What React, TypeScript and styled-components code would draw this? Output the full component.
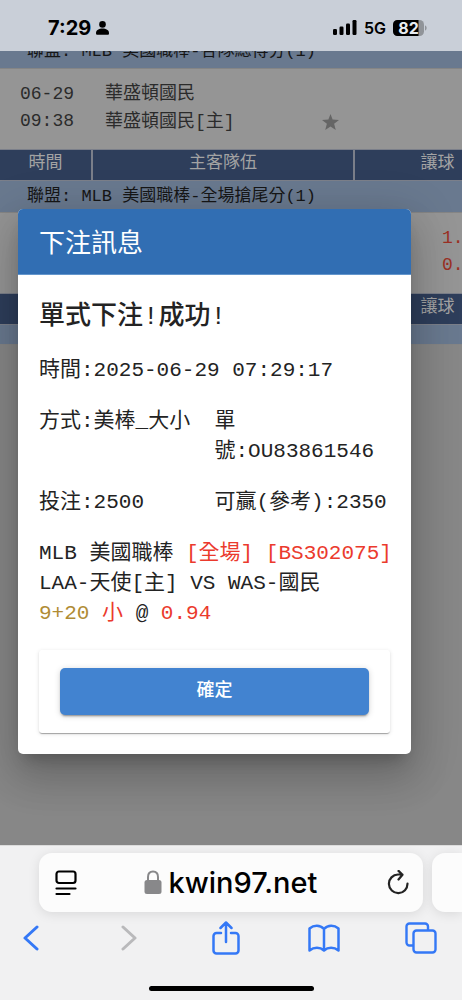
import React from "react";
import styled, { createGlobalStyle } from "styled-components";

const GlobalStyle = createGlobalStyle`
  * { box-sizing: border-box; }
  body {
    margin: 0;
    background: #f1f1f2;
    font-family: "Liberation Mono", "Noto Sans CJK TC", monospace;
    color: #232323;
  }
  button, input { font: inherit; color: inherit; border: 0; padding: 0; margin: 0; background: none; }
  button { cursor: pointer; }
  svg { display: block; }
`;

const Screen = styled.div`
  min-height: 100vh;
  display: flex;
  flex-direction: column;
`;

const StatusBar = styled.header`
  height: 51px;
  padding: 4px 35px 0 48px;
  display: flex;
  align-items: center;
  justify-content: space-between;
  background: #c9cfd8;
  color: #000;
  font-family: Inter, sans-serif;
`;

const StatusGroup = styled.div<{ $gap: number }>`
  display: flex;
  align-items: center;
  gap: ${(p) => p.$gap}px;
`;

const Clock = styled.span`
  font-size: 20px;
  font-weight: 700;
`;

const Network = styled.span`
  font-size: 16px;
  font-weight: 600;
`;

const Viewport = styled.main`
  position: relative;
  flex: 1;
  overflow: hidden;
  background: #878787;
`;

const OddsTable = styled.table`
  width: 521px;
  margin-top: -15px;
  table-layout: fixed;
  border-collapse: collapse;
  color: #242424;
`;

const HeadCell = styled.th`
  height: 31px;
  padding: 0 0 1px;
  border: 2px solid #7b7f8a;
  border-width: 1px 2px 1px 0;
  background: #2e3e5b;
  color: #a3a3a3;
  font-size: 17px;
  line-height: 24px;
  font-weight: 400;
`;

const LeagueCell = styled.td<{ $height: number }>`
  height: ${(p) => p.$height}px;
  padding: 1px 0 0 27px;
  border-bottom: 1px solid #858585;
  background: #69798f;
  color: #161616;
  font-size: 17px;
  line-height: 24px;
`;

const MatchCell = styled.td<{ $indent: number; $red?: boolean }>`
  height: 81px;
  padding: 12px 0 0 ${(p) => p.$indent}px;
  vertical-align: top;
  background: #959595;
  color: ${(p) => (p.$red ? "#9b3024" : "#2b2b2b")};
  font-size: 18px;
  line-height: 27px;
`;

const TeamRow = styled.div`
  display: flex;
  align-items: center;
  justify-content: space-between;
  padding: 1px 15px 0 0;
`;

const Overlay = styled.div`
  position: absolute;
  inset: 0;
  padding: 158px 51px 0 18px;
`;

const Dialog = styled.section`
  border-radius: 5px;
  overflow: hidden;
  background: #fff;
  box-shadow: 0 11px 15px -7px rgba(0, 0, 0, 0.2), 0 24px 38px 3px rgba(0, 0, 0, 0.14),
    0 9px 46px 8px rgba(0, 0, 0, 0.12);
`;

const DialogTitle = styled.h1`
  margin: 0;
  padding: 18px 21px 10px;
  background: #316eb3;
  border-bottom: 1px solid #6496cc;
  color: #fff;
  font-size: 26px;
  line-height: 37px;
  font-weight: 400;
`;

const DialogBody = styled.div`
  padding: 24px 21px 21px;
  display: flex;
  flex-direction: column;
  gap: 21px;
  font-size: 21px;
  line-height: 30px;
`;

const Result = styled.h2`
  margin: 0;
  font-size: 26px;
  line-height: 36px;
  font-weight: 500;
`;

const Line = styled.p`
  margin: 0;
  white-space: nowrap;
`;

const Pair = styled.div`
  display: grid;
  grid-template-columns: 1fr 1fr;
`;

const Item = styled.p`
  margin: 0;
`;

const Mark = styled.span<{ $gold?: boolean }>`
  color: ${(p) => (p.$gold ? "#b08c35" : "#eb3a2d")};
`;

const ActionCard = styled.div`
  padding: 18px 21px;
  border-radius: 3px;
  box-shadow: 0 2px 1px -1px rgba(0, 0, 0, 0.2), 0 1px 1px rgba(0, 0, 0, 0.14), 0 1px 4px rgba(0, 0, 0, 0.12);
`;

const ConfirmButton = styled.button`
  display: block;
  width: 100%;
  height: 47px;
  padding-bottom: 2px;
  border-radius: 5px;
  background: #4283d0;
  color: #fff;
  font-size: 18px;
  font-weight: 500;
  box-shadow: 0 3px 1px -2px rgba(0, 0, 0, 0.2), 0 2px 2px rgba(0, 0, 0, 0.14), 0 1px 6px rgba(0, 0, 0, 0.16);
`;

const BrowserBar = styled.footer`
  padding-bottom: 9px;
  border-top: 1px solid #dcdcdc;
  background: #f1f1f2;
  overflow: hidden;
`;

const TabStrip = styled.div`
  display: flex;
  gap: 9px;
  padding: 7px 0 0 39px;
`;

const AddressField = styled.div`
  flex: 1;
  height: 59px;
  padding: 0 14px 0 16px;
  display: flex;
  align-items: center;
  justify-content: space-between;
  border-radius: 13px;
  background: #fcfcfc;
  box-shadow: 0 2px 12px rgba(0, 0, 0, 0.1);
`;

const NextTab = styled.div`
  width: 30px;
  height: 59px;
  border-radius: 13px 0 0 13px;
  background: #fcfcfc;
  box-shadow: 0 2px 12px rgba(0, 0, 0, 0.1);
`;

const Site = styled.label`
  display: flex;
  align-items: center;
  gap: 7px;
`;

const AddressInput = styled.input`
  width: 152px;
  font-family: Inter, sans-serif;
  font-size: 29px;
  font-weight: 500;
  color: #000;
  outline: none;
`;

const Toolbar = styled.nav`
  display: flex;
  justify-content: space-between;
  padding: 8px 25px 0 15px;
  color: #3478f6;
`;

const ToolButton = styled.button`
  width: 32px;
  height: 36px;
  display: flex;
  align-items: center;
  justify-content: center;

  &:disabled { color: #b9b9bb; }
`;

const HomeIndicator = styled.div`
  width: 165px;
  height: 5px;
  margin: 30px auto 0;
  border-radius: 3px;
  background: #000;
`;

const Stroke = ({ w, h, d, width = 2.5 }: { w: number; h: number; d: string; width?: number }) => (
  <svg width={w} height={h} viewBox={`0 0 ${w} ${h}`} fill="none" stroke="currentColor" strokeWidth={width} strokeLinecap="round" strokeLinejoin="round" aria-hidden="true">
    <path d={d} />
  </svg>
);

const PersonIcon = () => (
  <svg width="13" height="14" viewBox="0 0 13 14" aria-hidden="true">
    <circle cx="6.5" cy="3.4" r="3.3" />
    <path d="M0 12.2C0 9.2 3 7.6 6.5 7.6S13 9.200 13 12.2C13 13.500 12.5 13.8 11.500 13.8H1.5C.5 13.8 0 13.500 0 12.2Z" />
  </svg>
);

const SignalIcon = () => (
  <svg width="24" height="15" viewBox="0 0 24 15" aria-hidden="true">
    <rect x="0" y="9" width="4" height="6" rx="1.2" />
    <rect x="6.5" y="6.5" width="4" height="8.5" rx="1.2" />
    <rect x="13" y="3.5" width="4" height="11.5" rx="1.2" />
    <rect x="19.5" y="0" width="4" height="15" rx="1.2" />
  </svg>
);

const BatteryIcon = () => (
  <svg width="34" height="16" viewBox="0 0 34 16" role="img" aria-label="82%">
    <rect width="31" height="16" rx="4.5" fill="#909499" />
    <path d="M4.5 0H25.5V16H4.5A4.5 4.5 0 0 1 0 11.5V4.5A4.5 4.5 0 0 1 4.5 0Z" fill="#000" />
    <path d="M32 5.5C34.2 6 34.2 10 32 10.5Z" fill="#909499" />
    <text x="15.5" y="13.5" textAnchor="middle" fill="#e8ecf1" fontFamily="Inter, sans-serif" fontSize="16" fontWeight="700">82</text>
  </svg>
);

const StarIcon = () => (
  <svg width="17" height="16" viewBox="0 0 17 16" fill="#656565" aria-hidden="true">
    <path d="M8.5 0L10.6 5.6L17 6L12.1 9.8L13.8 16L8.5 12.6L3.2 16L4.9 9.8L0 6L6.4 5.6Z" />
  </svg>
);

const LockIcon = () => (
  <svg width="18" height="25" viewBox="0 0 18 25" aria-hidden="true">
    <rect x="0.5" y="10" width="17" height="14" rx="2.5" fill="#88888a" />
    <path d="M4 11V7C4 3.5 6 1.5 9 1.5S14 3.5 14 7V11" fill="none" stroke="#88888a" strokeWidth="2" />
  </svg>
);

const PageIcon = () => (
  <svg width="22" height="26" viewBox="0 0 22 26" fill="none" stroke="#000" strokeWidth="2.2" strokeLinecap="round" aria-hidden="true">
    <rect x="1.5" y="1.500" width="19" height="11.500" rx="2.5" />
    <path d="M1.5 18.5H20.5M1.5 24H14.5" />
  </svg>
);

const TabsIcon = () => (
  <svg width="32" height="32" viewBox="0 0 32 32" fill="none" stroke="currentColor" strokeWidth="2.4" aria-hidden="true">
    <path d="M8 23.5H4.5A3 3 0 0 1 1.500 20.500V4.500A3 3 0 0 1 4.500 1.500H20A3 3 0 0 1 23 4.500V8" />
    <rect x="8.500" y="8.500" width="22" height="22" rx="3" />
  </svg>
);

export default function App() {
  return (
    <>
      <GlobalStyle />
      <Screen>
        <StatusBar>
          <StatusGroup $gap={5}>
            <Clock>7:29</Clock>
            <PersonIcon />
          </StatusGroup>
          <StatusGroup $gap={7}>
            <SignalIcon />
            <Network>5G</Network>
            <BatteryIcon />
          </StatusGroup>
        </StatusBar>

        <Viewport>
          <OddsTable>
            <colgroup>
              <col width="92" />
              <col width="262" />
              <col width="167" />
            </colgroup>
            <tbody>
              <tr>
                <LeagueCell colSpan={3} $height={32}>聯盟: MLB 美國職棒-各隊總得分(1)</LeagueCell>
              </tr>
              <tr>
                <MatchCell $indent={20}>06-29<br />09:38</MatchCell>
                <MatchCell $indent={13}>
                  華盛頓國民
                  <TeamRow>
                    華盛頓國民[主]
                    <StarIcon />
                  </TeamRow>
                </MatchCell>
                <MatchCell $indent={88} />
              </tr>
              <tr>
                <HeadCell scope="col">時間</HeadCell>
                <HeadCell scope="col">主客隊伍</HeadCell>
                <HeadCell scope="col">讓球</HeadCell>
              </tr>
              <tr>
                <LeagueCell colSpan={3} $height={32}>聯盟: MLB 美國職棒-全場搶尾分(1)</LeagueCell>
              </tr>
              <tr>
                <MatchCell $indent={20} />
                <MatchCell $indent={13} />
                <MatchCell $indent={88} $red>1.<br />0.</MatchCell>
              </tr>
              <tr>
                <HeadCell />
                <HeadCell />
                <HeadCell scope="col">讓球</HeadCell>
              </tr>
              <tr>
                <LeagueCell colSpan={3} $height={20} />
              </tr>
            </tbody>
          </OddsTable>

          <Overlay>
            <Dialog role="dialog" aria-labelledby="dialog-title">
              <DialogTitle id="dialog-title">下注訊息</DialogTitle>
              <DialogBody>
                <Result>單式下注!成功!</Result>
                <Line>時間:2025-06-29 07:29:17</Line>
                <Pair>
                  <Item>方式:美棒_大小</Item>
                  <Item>單<br />號:OU83861546</Item>
                </Pair>
                <Pair>
                  <Item>投注:2500</Item>
                  <Line>可贏(參考):2350</Line>
                </Pair>
                <div>
                  <Line>MLB 美國職棒 <Mark>[全場] [BS302075]</Mark></Line>
                  <Line>LAA-天使[主] VS WAS-國民</Line>
                  <Line><Mark $gold>9+20</Mark> <Mark>小</Mark> @ <Mark>0.94</Mark></Line>
                </div>
                <ActionCard>
                  <ConfirmButton type="button">確定</ConfirmButton>
                </ActionCard>
              </DialogBody>
            </Dialog>
          </Overlay>
        </Viewport>

        <BrowserBar>
          <TabStrip>
            <AddressField>
              <button type="button" aria-label="Page menu"><PageIcon /></button>
              <Site>
                <LockIcon />
                <AddressInput aria-label="Address" defaultValue="kwin97.net" />
              </Site>
              <button type="button" aria-label="Reload">
                <Stroke w={22} h={26} width={2.2} d="M20.500 13.500A9.300 9.300 0 1 1 11 4.500H15.500M11.500 .9L15.500 4.700L11.500 9.500" />
              </button>
            </AddressField>
            <NextTab />
          </TabStrip>
          <Toolbar>
            <ToolButton type="button" aria-label="Back">
              <Stroke w={16} h={26} width={3} d="M14 2L2 13L14 24" />
            </ToolButton>
            <ToolButton type="button" aria-label="Forward" disabled>
              <Stroke w={16} h={26} width={3} d="M2 2L14 13L2 24" />
            </ToolButton>
            <ToolButton type="button" aria-label="Share">
              <Stroke w={28} h={34} d="M9 12H4.500A3 3 0 0 0 1.500 15V29.500A3 3 0 0 0 4.500 32.500H23.500A3 3 0 0 0 26.500 29.500V15A3 3 0 0 0 23.500 12H19M14 21V2M8.500 7L14 1.500L19.500 7" />
            </ToolButton>
            <ToolButton type="button" aria-label="Bookmarks">
              <Stroke w={32} h={28} d="M16 5C12 .8 6 .8 1.500 4.500V26.500C6 22.800 12 22.800 16 26.500C20 22.800 26 22.800 30.500 26.500V4.500C26 .8 20 .8 16 5V26" />
            </ToolButton>
            <ToolButton type="button" aria-label="Tabs"><TabsIcon /></ToolButton>
          </Toolbar>
          <HomeIndicator />
        </BrowserBar>
      </Screen>
    </>
  );
}
